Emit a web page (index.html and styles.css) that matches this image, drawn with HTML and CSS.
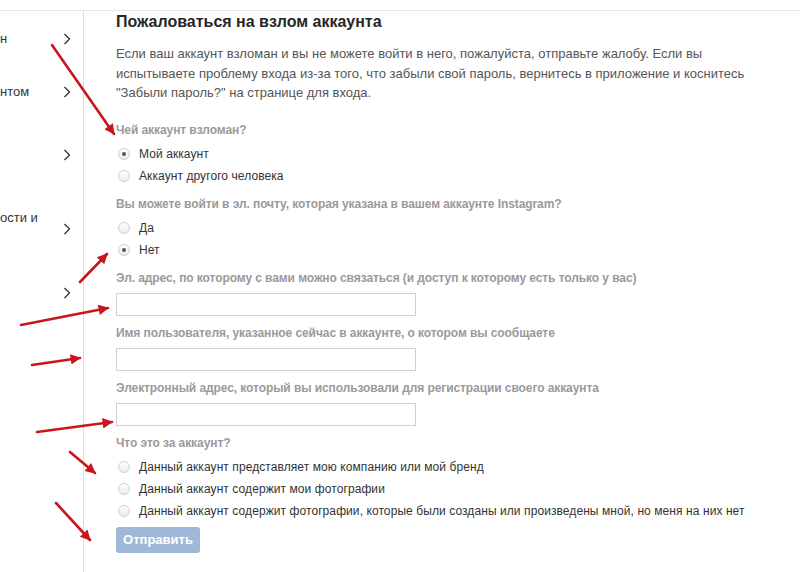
FILE: index.html
```html
<!DOCTYPE html>
<html lang="ru">
<head>
<meta charset="utf-8">
<title>Пожаловаться на взлом аккаунта</title>
<link rel="stylesheet" href="styles.css">
</head>
<body>
<div class="page">
  <aside class="sidebar">
    <div class="nav-item nav-item--a"><span class="nav-text">н</span><svg class="chev" viewBox="0 0 8 12"><polyline points="1.5,1 6.5,6 1.5,11"/></svg></div>
    <div class="nav-item nav-item--b"><span class="nav-text">нтом</span><svg class="chev" viewBox="0 0 8 12"><polyline points="1.5,1 6.5,6 1.5,11"/></svg></div>
    <div class="nav-item nav-item--c"><span class="nav-text"></span><svg class="chev" viewBox="0 0 8 12"><polyline points="1.5,1 6.5,6 1.5,11"/></svg></div>
    <div class="nav-item nav-item--d"><span class="nav-text">ости и<br>&nbsp;</span><svg class="chev" viewBox="0 0 8 12"><polyline points="1.5,1 6.5,6 1.5,11"/></svg></div>
    <div class="nav-item nav-item--e"><span class="nav-text"></span><svg class="chev" viewBox="0 0 8 12"><polyline points="1.5,1 6.5,6 1.5,11"/></svg></div>
  </aside>
  <main class="content">
    <h1 class="title">Пожаловаться на взлом аккаунта</h1>
    <p class="intro">Если ваш аккаунт взломан и вы не можете войти в него, пожалуйста, отправьте жалобу. Если вы испытываете проблему входа из-за того, что забыли свой пароль, вернитесь в приложение и коснитесь "Забыли пароль?" на странице для входа.</p>
    <form class="form">
      <div class="group">
        <div class="label">Чей аккаунт взломан?</div>
        <label class="radio-row"><span class="radio radio--on"></span>Мой аккаунт</label>
        <label class="radio-row"><span class="radio"></span>Аккаунт другого человека</label>
      </div>
      <div class="group">
        <div class="label">Вы можете войти в эл. почту, которая указана в вашем аккаунте Instagram?</div>
        <label class="radio-row"><span class="radio"></span>Да</label>
        <label class="radio-row"><span class="radio radio--on"></span>Нет</label>
      </div>
      <div class="group">
        <div class="label label--field">Эл. адрес, по которому с вами можно связаться (и доступ к которому есть только у вас)</div>
        <div class="field"></div>
      </div>
      <div class="group">
        <div class="label label--field">Имя пользователя, указанное сейчас в аккаунте, о котором вы сообщаете</div>
        <div class="field"></div>
      </div>
      <div class="group">
        <div class="label label--field">Электронный адрес, который вы использовали для регистрации своего аккаунта</div>
        <div class="field"></div>
      </div>
      <div class="group">
        <div class="label">Что это за аккаунт?</div>
        <label class="radio-row"><span class="radio"></span>Данный аккаунт представляет мою компанию или мой бренд</label>
        <label class="radio-row"><span class="radio"></span>Данный аккаунт содержит мои фотографии</label>
        <label class="radio-row"><span class="radio"></span>Данный аккаунт содержит фотографии, которые были созданы или произведены мной, но меня на них нет</label>
        <div class="submit">Отправить</div>
      </div>
    </form>
  </main>
</div>
<svg class="arrows" width="800" height="572" viewBox="0 0 800 572">
  <defs>
    <marker id="head" viewBox="0 0 10 10" refX="9" refY="5" markerWidth="5" markerHeight="4" orient="auto" markerUnits="strokeWidth">
      <path d="M0,0 L10,5 L0,10 z" class="head"/>
    </marker>
  </defs>
  <line x1="52" y1="45" x2="114" y2="134" marker-end="url(#head)"/>
  <line x1="80" y1="282" x2="107" y2="254" marker-end="url(#head)"/>
  <line x1="21" y1="325" x2="108" y2="308" marker-end="url(#head)"/>
  <line x1="32" y1="365" x2="80" y2="358" marker-end="url(#head)"/>
  <line x1="37" y1="432" x2="112" y2="422" marker-end="url(#head)"/>
  <line x1="70" y1="452" x2="95" y2="473" marker-end="url(#head)"/>
  <line x1="56" y1="503" x2="90" y2="540" marker-end="url(#head)"/>
</svg>
</body>
</html>
```
FILE: styles.css
```css
* { box-sizing: border-box; }
html, body { margin: 0; padding: 0; background: #fff; }
body {
  font-family: "Liberation Sans", Arial, sans-serif;
  color: #333;
  width: 800px;
  height: 572px;
  overflow: hidden;
  position: relative;
}
.page {
  margin-top: 10px;
  border-top: 1px solid #e6e6e6;
  display: flex;
  height: 562px;
}
.sidebar {
  width: 84px;
  flex: none;
  border-right: 1px solid #dcdcdc;
  display: flex;
  flex-direction: column;
  padding-top: 1px;
}
.nav-item {
  display: flex;
  align-items: center;
  justify-content: space-between;
  padding-right: 12px;
  font-size: 13px;
  color: #333;
}
.nav-item--a { height: 53px; }
.nav-item--b { height: 54px; }
.nav-item--c { height: 72px; }
.nav-item--d { height: 76px; }
.nav-item--e { height: 52px; }
.nav-text { line-height: 22px; white-space: nowrap; }
.chev { width: 8px; height: 12px; flex: none; }
.chev polyline { fill: none; stroke: #333; stroke-width: 1.3; }
.content {
  flex: 1;
  padding-left: 32px;
  padding-top: 1px;
}
.title {
  margin: 0;
  font-size: 16px;
  line-height: 20px;
  font-weight: bold;
  color: #262626;
}
.intro {
  margin: 12px 0 0;
  width: 640px;
  font-size: 13px;
  line-height: 19.5px;
  color: #555;
}
.form {
  margin-top: 19px;
  display: flex;
  flex-direction: column;
  gap: 9px;
}
.group { display: flex; flex-direction: column; }
.label {
  font-size: 12px;
  line-height: 16px;
  font-weight: bold;
  color: #9a9a9a;
  margin-bottom: 5px;
  letter-spacing: -0.08px;
}
.label--field { margin-bottom: 7px; }
.radio-row {
  display: flex;
  align-items: center;
  height: 22px;
  font-size: 12px;
  color: #333;
  letter-spacing: 0.08px;
}
.radio {
  width: 12px;
  height: 12px;
  border-radius: 50%;
  border: 1px solid #cfcfcf;
  background: linear-gradient(#fff, #ececec);
  margin-left: 2px;
  margin-right: 9px;
  position: relative;
  flex: none;
}
.radio--on::after {
  content: "";
  position: absolute;
  left: 3px;
  top: 3px;
  width: 4px;
  height: 4px;
  border-radius: 50%;
  background: #555;
}
.field {
  width: 300px;
  height: 23px;
  border: 1px solid #d0d0d0;
  background: #fff;
}
.submit {
  margin-top: 5px;
  width: 84px;
  height: 26px;
  border-radius: 3px;
  background: #9fb8d7;
  color: #fff;
  font-weight: bold;
  font-size: 13px;
  display: flex;
  align-items: center;
  justify-content: center;
}
.arrows {
  position: absolute;
  left: 0;
  top: 0;
  pointer-events: none;
}
.arrows line { stroke: #c8161d; stroke-width: 2.6; stroke-linecap: round; }
.arrows .head { fill: #c8161d; }
```
